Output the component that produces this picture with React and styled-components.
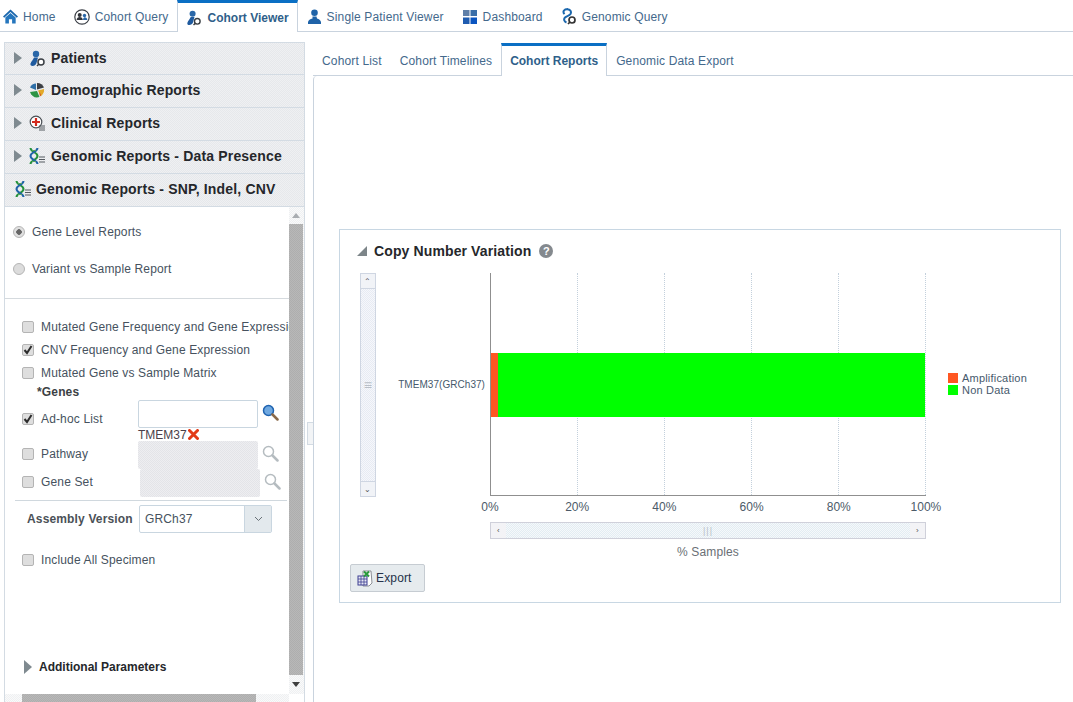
import React from 'react';
import styled, { createGlobalStyle } from 'styled-components';

const dither = (a, b) => `repeating-conic-gradient(${a} 0 25%, ${b} 0 50%) 0 0 / 2px 2px`;

const GlobalStyle = createGlobalStyle`
  html, body {
    margin: 0;
    padding: 0;
    background: #fff;
  }
  body {
    font-family: "Liberation Sans", Arial, sans-serif;
    font-size: 12px;
    letter-spacing: 0.15px;
    color: #46525e;
  }
  * {
    box-sizing: border-box;
  }
`;

const Page = styled.div`
  width: 1073px;
  height: 702px;
  overflow: hidden;
  display: flex;
  flex-direction: column;
`;

const TopNav = styled.div`
  display: flex;
  flex: none;
  height: 32px;
  border-bottom: 1px solid #c9d3de;
`;

const TopTab = styled.div`
  display: flex;
  align-items: center;
  gap: 5px;
  height: ${p => (p.active ? '32px' : '31px')};
  padding: ${p => (p.active ? '0 8px' : '2px 9px 0')};
  font-size: 12px;
  color: #44698c;
  white-space: nowrap;
  background: #fff;
  &:first-child {
    padding-left: 3px;
  }
  ${p =>
    p.active &&
    `
    font-weight: bold;
    letter-spacing: 0;
    color: #2f5f8a;
    border-top: 3px solid #0a6fc4;
    border-left: 1px solid #c9d3de;
    border-right: 1px solid #c9d3de;
  `}
`;

const Body = styled.div`
  display: flex;
  flex: 1;
  min-height: 0;
`;

const LeftColumn = styled.div`
  flex: none;
  width: 305px;
  padding: 10px 0 0 4px;
  display: flex;
  flex-direction: column;
`;

const Accordion = styled.div`
  flex: 1;
  min-height: 0;
  display: flex;
  flex-direction: column;
  border-left: 1px solid #d3dbe3;
  border-right: 1px solid #d3dbe3;
`;

const AccordionHeader = styled.div`
  flex: none;
  display: flex;
  align-items: center;
  height: ${p => (p.open ? '34px' : '33px')};
  padding: 0 0 ${p => (p.open ? '3px' : '2px')} ${p => (p.open ? '10px' : '9px')};
  border-top: 1px solid #d3dbe3;
  background: ${dither('#e6e8eb', '#eff0f2')};
  font-size: 14px;
  font-weight: bold;
  letter-spacing: 0.17px;
  color: #25272b;
  white-space: nowrap;
  ${p => p.open && 'border-bottom: 1px solid #d3dbe3;'}
  &:first-child {
    height: 32px;
    padding-bottom: 1px;
  }
`;

const Caret = styled.span`
  flex: none;
  width: 0;
  height: 0;
  border-style: solid;
  border-width: ${p => (p.small ? '7px 0 7px 8px' : '6px 0 6px 8px')};
  border-color: transparent transparent transparent #7f8a90;
`;

const HeaderIcon = styled.span`
  display: flex;
  flex: none;
  width: ${p => (p.open ? '16px' : '17px')};
  margin: ${p => (p.open ? '0 5px 0 0' : '0 5px 0 7px')};
`;

const PanelBody = styled.div`
  flex: 1;
  min-height: 0;
  display: flex;
  flex-direction: column;
`;

const PanelMain = styled.div`
  flex: 1;
  min-height: 0;
  display: flex;
`;

const FormArea = styled.div`
  flex: 1;
  min-width: 0;
  overflow: hidden;
`;

const RadioSection = styled.div`
  height: 92px;
  padding: 6px 0 0 8px;
  border-bottom: 1px solid #d5dade;
`;

const RadioRow = styled.div`
  display: flex;
  align-items: center;
  gap: 7px;
  height: 37px;
`;

const Radio = styled.span`
  flex: none;
  width: 12px;
  height: 12px;
  border-radius: 50%;
  border: 1px solid #b5b5b5;
  background: ${p => (p.checked ? 'radial-gradient(circle, #666 0 2.5px, #e0e0e0 3px)' : '#dcdcdc')};
`;

const CheckSection = styled.div`
  padding: 16px 0 0 17px;
`;

const CheckRow = styled.div`
  display: flex;
  align-items: center;
  gap: 7px;
  height: 23px;
  white-space: nowrap;
`;

const Check = styled.span`
  flex: none;
  display: flex;
  align-items: center;
  justify-content: center;
  width: 12px;
  height: 12px;
  border: 1px solid #b4b4b4;
  border-radius: 2px;
  background: #dedede;
`;

const GenesLabel = styled.div`
  height: 16px;
  line-height: 16px;
  padding-left: 15px;
  font-weight: bold;
  color: #3c3f44;
`;

const GeneRow = styled.div`
  display: flex;
  align-items: flex-start;
  height: 28px;
  white-space: nowrap;
`;

const GeneField = styled.div`
  flex: none;
  display: flex;
  align-items: center;
  gap: 7px;
  width: 116px;
  height: 14px;
  margin-top: ${p => p.top}px;
`;

const GeneInput = styled.div`
  flex: none;
  width: 120px;
  height: 28px;
  margin-left: ${p => p.shift || 0}px;
  margin-right: 4px;
  border-radius: 2px;
  ${p =>
    p.disabled
      ? `background: ${dither('#e3e4e8', '#eeeef1')};`
      : `background: #fff; border: 1px solid #c9d6e0;`}
`;

const GeneSearch = styled.span`
  flex: none;
  display: flex;
  margin-top: 4px;
`;

const TokenRow = styled.div`
  display: flex;
  align-items: center;
  gap: 1px;
  height: 13px;
  padding-left: 116px;
  letter-spacing: 0;
  color: #4a3f4a;
`;

const Divider = styled.div`
  height: 1px;
  margin: 3px 0 0 -7px;
  width: 272px;
  background: #d0d8de;
`;

const AssemblyRow = styled.div`
  display: flex;
  align-items: center;
  height: 28px;
  margin: 4px 0 0 5px;
`;

const AssemblyLabel = styled.span`
  flex: none;
  width: 112px;
  font-weight: bold;
  color: #4b5157;
`;

const SelectBox = styled.div`
  flex: none;
  display: flex;
  width: 133px;
  height: 28px;
  border: 1px solid #c9d6e0;
  border-radius: 2px;
`;

const SelectValue = styled.span`
  flex: 1;
  padding-left: 5px;
  line-height: 26px;
`;

const SelectButton = styled.span`
  flex: none;
  display: flex;
  align-items: center;
  justify-content: center;
  width: 27px;
  background: #e3e9ed;
  border-left: 1px solid #c9d6e0;
`;

const IncludeRow = styled(CheckRow)`
  margin-top: 15px;
`;

const AdditionalRow = styled.div`
  display: flex;
  align-items: center;
  gap: 7px;
  height: 18px;
  margin: 87px 0 0 2px;
  font-weight: bold;
  letter-spacing: 0;
  color: #25272b;
`;

const VTrack = styled.div`
  flex: none;
  width: 15px;
  display: flex;
  flex-direction: column;
  align-items: stretch;
  padding: 0 1px 0 0;
  background: ${dither('#eef0f2', '#fafafa')};
`;

const ScrollArrow = styled.span`
  flex: none;
  display: flex;
  align-items: center;
  justify-content: center;
  height: ${p => p.size}px;
`;

const VThumb = styled.div`
  flex: 1;
  background: ${dither('#aeaeae', '#b8b8b8')};
`;

const HTrack = styled.div`
  flex: none;
  display: flex;
  align-items: center;
  height: 8px;
  width: 284px;
  background: ${dither('#eef0f2', '#fafafa')};
`;

const HThumb = styled.div`
  width: 234px;
  height: 8px;
  margin-left: 17px;
  background: ${dither('#aeaeae', '#b8b8b8')};
`;

const SplitterColumn = styled.div`
  flex: none;
  width: 8px;
  display: flex;
  justify-content: flex-end;
  align-items: flex-start;
  padding-top: 390px;
`;

const SplitterHandle = styled.div`
  width: 6px;
  height: 23px;
  border: 1px solid #d3dbe3;
  border-right: none;
  background: #f2f4f6;
`;

const RightColumn = styled.div`
  flex: 1;
  min-width: 0;
  display: flex;
  flex-direction: column;
  padding-top: 11px;
`;

const SubTabs = styled.div`
  flex: none;
  display: flex;
  height: 33px;
  border-bottom: 1px solid #c9d3de;
`;

const SubTab = styled.div`
  display: flex;
  align-items: center;
  height: ${p => (p.active ? '33px' : '32px')};
  padding: ${p => (p.active ? '0 8px' : '3px 9px 0')};
  color: #44698c;
  white-space: nowrap;
  background: #fff;
  ${p =>
    p.active &&
    `
    font-weight: bold;
    letter-spacing: 0;
    color: #2f5f8a;
    border-top: 3px solid #0a6fc4;
    border-left: 1px solid #c9d3de;
    border-right: 1px solid #c9d3de;
  `}
`;

const ReportArea = styled.div`
  flex: 1;
  min-height: 0;
  padding: 153px 0 0 25px;
  border-left: 1px solid #c9d3de;
  border-top-left-radius: 4px;
`;

const Card = styled.div`
  width: 722px;
  height: 374px;
  border: 1px solid #c8d7e3;
`;

const CardTitle = styled.div`
  display: flex;
  align-items: center;
  height: 43px;
  padding: 0 0 2px 17px;
  font-size: 14px;
  font-weight: bold;
  letter-spacing: 0.12px;
  color: #25272b;
`;

const CollapseMark = styled.span`
  flex: none;
  width: 0;
  height: 0;
  margin-right: 7px;
  border-style: solid;
  border-width: 0 0 10px 10px;
  border-color: transparent transparent #7d8589 transparent;
`;

const HelpMark = styled.span`
  flex: none;
  display: flex;
  align-items: center;
  justify-content: center;
  width: 14px;
  height: 14px;
  margin-left: 8px;
  border-radius: 50%;
  background: #84898e;
  color: #fff;
  font-size: 11px;
  font-weight: bold;
  letter-spacing: 0;
`;

const ChartRow = styled.div`
  display: flex;
  height: 224px;
  margin-left: 20px;
`;

const ChartVScroll = styled.div`
  flex: none;
  display: flex;
  flex-direction: column;
  width: 16px;
  border: 1px solid #cfd6e2;
  background: ${dither('#e7ebf3', '#f6f7fb')};
`;

const ChartScrollEnd = styled.span`
  flex: none;
  display: flex;
  align-items: center;
  justify-content: center;
  height: 15px;
  background: #f1f3f7;
  font-size: 8px;
  color: #555;
  ${p => (p.bottom ? 'border-top: 1px solid #cfd6e2;' : 'border-bottom: 1px solid #cfd6e2;')}
`;

const ChartScrollMiddle = styled.span`
  flex: 1;
  display: flex;
  align-items: center;
  justify-content: center;
  color: #b9bfc7;
  font-size: 14px;
  line-height: 3px;
`;

const CategoryAxis = styled.div`
  flex: none;
  display: flex;
  align-items: center;
  justify-content: flex-end;
  width: 114px;
  height: 223px;
  padding-right: 5px;
  font-size: 10px;
  letter-spacing: 0.05px;
  color: #46596c;
  white-space: nowrap;
`;

const Plot = styled.div`
  position: relative;
  flex: none;
  display: flex;
  width: 436px;
  height: 223px;
  border-left: 1px solid #8f8f8f;
  border-bottom: 1px solid #8f8f8f;
`;

const GridCell = styled.div`
  flex: 1;
  border-right: 1px dotted #c3d0dc;
`;

const StackedBar = styled.div`
  position: absolute;
  left: 0;
  right: 1px;
  top: 80px;
  height: 64px;
  display: flex;
`;

const BarSegment = styled.div`
  background: ${p => p.color};
  flex: ${p => (p.grow ? 1 : 'none')};
`;

const Legend = styled.div`
  flex: none;
  display: flex;
  flex-direction: column;
  justify-content: center;
  gap: 1px;
  height: 221px;
  margin-left: 22px;
  font-size: 11px;
  letter-spacing: 0.2px;
  color: #46596c;
`;

const LegendItem = styled.div`
  display: flex;
  align-items: center;
  gap: 4px;
  height: 11px;
`;

const LegendSwatch = styled.span`
  flex: none;
  width: 10px;
  height: 10px;
  background: ${p => p.color};
`;

const TickRow = styled.div`
  display: flex;
  justify-content: space-between;
  width: 436px;
  height: 20px;
  margin: 0 0 0 150px;
  align-items: center;
`;

const Tick = styled.span`
  display: flex;
  justify-content: center;
  width: 0;
  white-space: nowrap;
  font-size: 12px;
  letter-spacing: 0;
  color: #4c5a68;
`;

const ChartHScroll = styled.div`
  display: flex;
  align-items: stretch;
  width: 436px;
  height: 17px;
  margin: 5px 0 0 150px;
  border: 1px solid #cfd0da;
  background: ${dither('#e2edf3', '#f6f8fa')};
`;

const ChartHEnd = styled.span`
  flex: none;
  display: flex;
  align-items: center;
  justify-content: center;
  width: 15px;
  background: #f3f3f6;
  font-size: 8px;
  color: #555;
`;

const ChartHMiddle = styled.span`
  flex: 1;
  display: flex;
  align-items: center;
  justify-content: center;
  font-size: 9px;
  letter-spacing: 1px;
  color: #b9bfc7;
`;

const AxisTitle = styled.div`
  width: 436px;
  margin: 6px 0 0 150px;
  height: 15px;
  line-height: 15px;
  text-align: center;
  color: #6a6f75;
`;

const ExportButton = styled.div`
  display: flex;
  align-items: center;
  gap: 3px;
  width: 75px;
  height: 28px;
  margin: 4px 0 0 10px;
  padding-left: 6px;
  border: 1px solid #c6ccd2;
  border-radius: 2px;
  background: #e6ebee;
  color: #25324a;
`;

const PersonSearchIcon = ({ size = 17 }) => (
  <svg width={size} height={size} viewBox="0 0 17 17">
    <circle cx="7" cy="4" r="3.2" fill="#2a67a8" />
    <path d="M5 7.5h4L7.5 13c-.6 1.8-2.2 3-4 3-1.500 0-2.500-1-2-2.500C2.200 11.500 4 10 5 7.500z" fill="#1f5a9e" />
    <circle cx="12" cy="12" r="3" fill="#fff" stroke="#3a3f44" strokeWidth="1.500" />
    <path d="M10 14l-2 2" stroke="#3a3f44" strokeWidth="1.500" />
  </svg>
);

const HomeIcon = () => (
  <svg width="15" height="15" viewBox="0 0 16 15">
    <path d="M0 7.500L8 0l8 7.500-1.300 1.300L8 2.700 1.300 8.800z" fill="#1b67ad" />
    <path d="M2.500 8.500L8 3.700l5.500 4.800V15H9.700v-4.500H6.300V15H2.500z" fill="#2576bd" />
  </svg>
);

const CohortIcon = () => (
  <svg width="16" height="16" viewBox="0 0 16 16">
    <circle cx="8" cy="8" r="7.200" fill="#fff" stroke="#3b3f46" strokeWidth="1.200" />
    <circle cx="5.700" cy="6" r="2" fill="#33363c" />
    <path d="M2.500 11c.3-2 1.500-3 3.200-3s2.900 1 3.200 3z" fill="#33363c" />
    <circle cx="10.500" cy="6.500" r="1.700" fill="#2a67a8" />
    <path d="M9 11c.2-1.800 .8-2.800 1.700-2.800 1.400 0 2.400 1 2.700 2.800z" fill="#2a67a8" />
  </svg>
);

const PersonIcon = () => (
  <svg width="15" height="15" viewBox="0 0 15 15">
    <circle cx="7.500" cy="3.700" r="3.300" fill="#1f63a8" />
    <path d="M5.500 7.500h4l.5 2c2 .5 3.500 1.500 4 3.500v2H1v-2c.5-2 2-3 4.500-3.500z" fill="#1f63a8" />
  </svg>
);

const DashboardIcon = () => (
  <svg width="16" height="14" viewBox="-1 0 16 14">
    <rect x="0" y="0" width="6.500" height="6" fill="#5f7fa8" />
    <rect x="7.500" y="0" width="6.500" height="6" fill="#3a6ea8" />
    <rect x="0" y="7.500" width="6.500" height="6.500" fill="#1f5cb0" />
    <rect x="7.500" y="7.500" width="6.500" height="6.500" fill="#0a55c0" />
  </svg>
);

const DnaSearchIcon = () => (
  <svg width="16" height="17" viewBox="0 0 16 17">
    <path d="M7 1C2.500 1 1.500 4 3.500 6.200M4 1.500c4.500-1 7 1.500 5.500 4.500-1.200 2-4 2-5.500 3.500-1.500 1.500-1 4 1.500 5" fill="none" stroke="#1b67ad" strokeWidth="2" />
    <circle cx="11" cy="12" r="3" fill="#fff" stroke="#333" strokeWidth="1.700" />
    <path d="M9 14l-2 2" stroke="#333" strokeWidth="1.700" />
  </svg>
);

const PieIcon = () => (
  <svg width="16" height="16" viewBox="0 0 16 16">
    <path d="M7 8L1 5.500C2 3 4.500 1.500 7 1.500z" fill="#2e6fa8" />
    <path d="M8 7.500V1c3.500 0 6 2 7 4.500z" fill="#3c3f44" />
    <path d="M9 8.500l6-1.500c.4 3-1 6-3.500 7.500z" fill="#e3a928" />
    <path d="M8 9l2.500 6c-4 1.500-8-.5-9.500-5z" fill="#2e9445" />
    <path d="M10.500 9.500l1.500 4-1.200.6z" fill="#c43a20" />
  </svg>
);

const ClinicalIcon = () => (
  <svg width="17" height="16" viewBox="0 0 17 16">
    <circle cx="7" cy="7" r="5.800" fill="#fff" stroke="#4a4f55" strokeWidth="1.200" />
    <path d="M3 7h8M7 3v8" stroke="#d22a1e" strokeWidth="2.200" />
    <path d="M10 11h6M10 13h6M10 15h6" stroke="#555a60" strokeWidth="1.200" />
  </svg>
);

const DnaListIcon = () => (
  <svg width="16" height="16" viewBox="0 0 16 16">
    <path d="M1.500 0c0 4 7 4 7 8s-7 4-7 8" fill="none" stroke="#25923c" strokeWidth="2" />
    <path d="M8.500 0c0 4-7 4-7 8s7 4 7 8" fill="none" stroke="#1f63a8" strokeWidth="2" />
    <path d="M3 2.500h4M3 13.500h4" stroke="#56a05f" strokeWidth="1.200" />
    <path d="M10 9h6M10 11.500h6M10 14h6" stroke="#555a60" strokeWidth="1.200" />
  </svg>
);

const CheckMark = () => (
  <svg width="10" height="10" viewBox="0 0 10 10">
    <path d="M1.500 5l2.500 3 4.500-7" fill="none" stroke="#2c2c2c" strokeWidth="2" />
  </svg>
);

const SearchIcon = ({ active }) => (
  <svg width="17" height="17" viewBox="0 0 17 17">
    <circle cx="6.500" cy="6.500" r="5" fill={active ? '#6fa8e0' : '#fff'} stroke={active ? '#1f63b0' : '#b5bcc0'} strokeWidth="1.500" />
    <path d="M10.500 10.500l5 5" stroke={active ? '#8a6a4a' : '#b5bcc0'} strokeWidth="2.500" strokeLinecap="round" />
  </svg>
);

const RemoveIcon = () => (
  <svg width="11" height="11" viewBox="0 0 11 11">
    <path d="M1.500 1.500l8 8M9.500 1.500l-8 8" stroke="#e23a17" strokeWidth="3" strokeLinecap="round" />
  </svg>
);

const ExcelIcon = () => (
  <svg width="16" height="17" viewBox="0 0 16 17">
    <path d="M6 1h8l1 12-3 3H6z" fill="#fff" stroke="#8c8f96" />
    <rect x="1" y="6" width="9" height="9" fill="#e8e8f4" stroke="#3d3f92" />
    <path d="M1 9h9M1 12h9M4 6v9M7 6v9" stroke="#3d3f92" strokeWidth="0.800" />
    <path d="M7 1.500l5 5M12 1.500l-5 5" stroke="#2a9a3c" strokeWidth="2" />
  </svg>
);

const ChevronDown = () => (
  <svg width="9" height="6" viewBox="0 0 9 6">
    <path d="M1 1l3.500 3.500L8 1" fill="none" stroke="#6a7278" />
  </svg>
);

const ArrowGlyph = ({ dir }) => (
  <svg width="8" height="5" viewBox="0 0 8 5">
    <path d={dir === 'up' ? 'M0 5l4-5 4 5z' : 'M0 0l4 5 4-5z'} fill={dir === 'up' ? '#a9adb1' : '#3f3f3f'} />
  </svg>
);

const panels = [
  { title: 'Patients', icon: <PersonSearchIcon /> },
  { title: 'Demographic Reports', icon: <PieIcon /> },
  { title: 'Clinical Reports', icon: <ClinicalIcon /> },
  { title: 'Genomic Reports - Data Presence', icon: <DnaListIcon /> }
];

const ticks = ['0%', '20%', '40%', '60%', '80%', '100%'];

function CheckField({ checked, children }) {
  return (
    <>
      <Check>{checked && <CheckMark />}</Check>
      {children}
    </>
  );
}

export default function App() {
  return (
    <Page>
      <GlobalStyle />
      <TopNav>
        <TopTab><HomeIcon />Home</TopTab>
        <TopTab><CohortIcon />Cohort Query</TopTab>
        <TopTab active><PersonSearchIcon size={16} />Cohort Viewer</TopTab>
        <TopTab><PersonIcon />Single Patient Viewer</TopTab>
        <TopTab><DashboardIcon />Dashboard</TopTab>
        <TopTab><DnaSearchIcon />Genomic Query</TopTab>
      </TopNav>
      <Body>
        <LeftColumn>
          <Accordion>
            {panels.map(panel => (
              <AccordionHeader key={panel.title}>
                <Caret />
                <HeaderIcon>{panel.icon}</HeaderIcon>
                {panel.title}
              </AccordionHeader>
            ))}
            <AccordionHeader open>
              <HeaderIcon open><DnaListIcon /></HeaderIcon>
              Genomic Reports - SNP, Indel, CNV
            </AccordionHeader>
            <PanelBody>
              <PanelMain>
                <FormArea>
                  <RadioSection>
                    <RadioRow><Radio checked />Gene Level Reports</RadioRow>
                    <RadioRow><Radio />Variant vs Sample Report</RadioRow>
                  </RadioSection>
                  <CheckSection>
                    <CheckRow><CheckField>Mutated Gene Frequency and Gene Expression</CheckField></CheckRow>
                    <CheckRow><CheckField checked>CNV Frequency and Gene Expression</CheckField></CheckRow>
                    <CheckRow><CheckField>Mutated Gene vs Sample Matrix</CheckField></CheckRow>
                    <GenesLabel>*Genes</GenesLabel>
                    <GeneRow>
                      <GeneField top={12}><CheckField checked>Ad-hoc List</CheckField></GeneField>
                      <GeneInput />
                      <GeneSearch><SearchIcon active /></GeneSearch>
                    </GeneRow>
                    <TokenRow>TMEM37<RemoveIcon /></TokenRow>
                    <GeneRow>
                      <GeneField top={6}><CheckField>Pathway</CheckField></GeneField>
                      <GeneInput disabled />
                      <GeneSearch><SearchIcon /></GeneSearch>
                    </GeneRow>
                    <GeneRow>
                      <GeneField top={6}><CheckField>Gene Set</CheckField></GeneField>
                      <GeneInput disabled shift={2} />
                      <GeneSearch><SearchIcon /></GeneSearch>
                    </GeneRow>
                    <Divider />
                    <AssemblyRow>
                      <AssemblyLabel>Assembly Version</AssemblyLabel>
                      <SelectBox>
                        <SelectValue>GRCh37</SelectValue>
                        <SelectButton><ChevronDown /></SelectButton>
                      </SelectBox>
                    </AssemblyRow>
                    <IncludeRow><CheckField>Include All Specimen</CheckField></IncludeRow>
                    <AdditionalRow><Caret small />Additional Parameters</AdditionalRow>
                  </CheckSection>
                </FormArea>
                <VTrack>
                  <ScrollArrow size={17}><ArrowGlyph dir="up" /></ScrollArrow>
                  <VThumb />
                  <ScrollArrow size={19}><ArrowGlyph dir="down" /></ScrollArrow>
                </VTrack>
              </PanelMain>
              <HTrack><HThumb /></HTrack>
            </PanelBody>
          </Accordion>
        </LeftColumn>
        <SplitterColumn><SplitterHandle /></SplitterColumn>
        <RightColumn>
          <SubTabs>
            <SubTab>Cohort List</SubTab>
            <SubTab>Cohort Timelines</SubTab>
            <SubTab active>Cohort Reports</SubTab>
            <SubTab>Genomic Data Export</SubTab>
          </SubTabs>
          <ReportArea>
            <Card>
              <CardTitle>
                <CollapseMark />
                Copy Number Variation
                <HelpMark>?</HelpMark>
              </CardTitle>
              <ChartRow>
                <ChartVScroll>
                  <ChartScrollEnd>⌃</ChartScrollEnd>
                  <ChartScrollMiddle>≡</ChartScrollMiddle>
                  <ChartScrollEnd bottom>⌄</ChartScrollEnd>
                </ChartVScroll>
                <CategoryAxis>TMEM37(GRCh37)</CategoryAxis>
                <Plot>
                  {ticks.slice(1).map(t => <GridCell key={t} />)}
                  <StackedBar>
                    <BarSegment color="#ff5722" style={{ width: 7 }} />
                    <BarSegment color="#00ff00" grow="true" />
                  </StackedBar>
                </Plot>
                <Legend>
                  <LegendItem><LegendSwatch color="#ff5722" />Amplification</LegendItem>
                  <LegendItem><LegendSwatch color="#00ff00" />Non Data</LegendItem>
                </Legend>
              </ChartRow>
              <TickRow>
                {ticks.map(t => <Tick key={t}>{t}</Tick>)}
              </TickRow>
              <ChartHScroll>
                <ChartHEnd>‹</ChartHEnd>
                <ChartHMiddle>|||</ChartHMiddle>
                <ChartHEnd>›</ChartHEnd>
              </ChartHScroll>
              <AxisTitle>% Samples</AxisTitle>
              <ExportButton><ExcelIcon />Export</ExportButton>
            </Card>
          </ReportArea>
        </RightColumn>
      </Body>
    </Page>
  );
}
